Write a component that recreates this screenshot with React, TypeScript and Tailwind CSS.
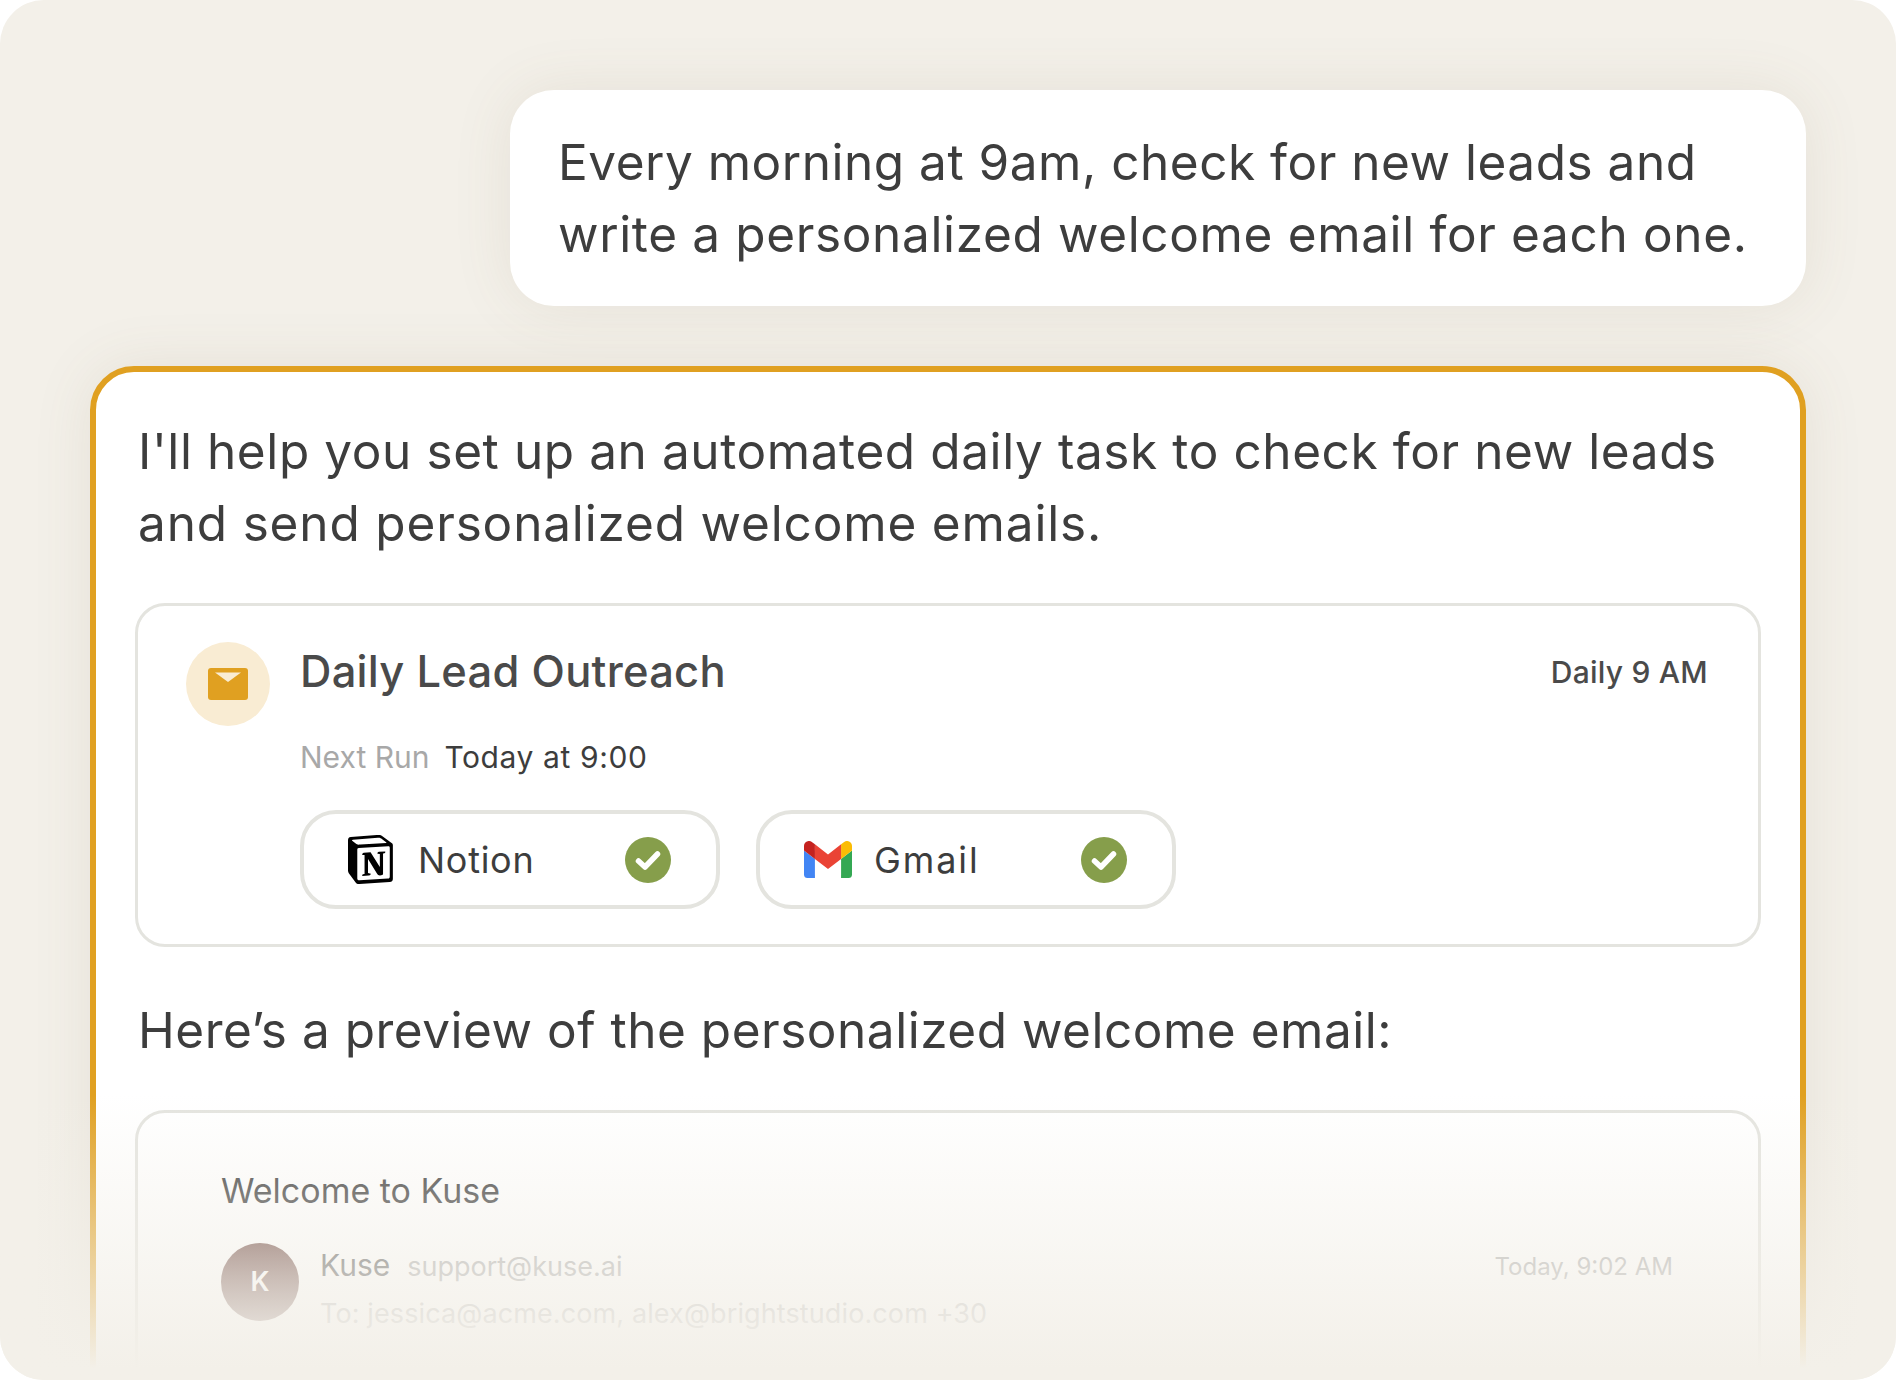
const font = 'font-["Inter","Liberation_Sans",sans-serif]'

function NotionLogo() {
  return (
    <svg width="45" height="49" viewBox="0 0 96 100" preserveAspectRatio="none" className="shrink-0">
      <path
        fill="#fff"
        d="M6.017 4.313l55.333 -4.087c6.797 -0.583 8.543 -0.19 12.817 2.917l17.663 12.443c2.913 2.14 3.883 2.723 3.883 5.053v68.243c0 4.277 -1.553 6.807 -6.99 7.193L24.467 99.967c-4.08 0.193 -6.023 -0.39 -8.16 -3.113L3.3 79.94c-2.333 -3.113 -3.3 -5.443 -3.3 -8.167V11.113c0 -3.497 1.553 -6.413 6.017 -6.8z"
      />
      <path
        fill="#000"
        fillRule="evenodd"
        d="M61.35 0.227l-55.333 4.087C1.553 4.7 0 7.617 0 11.113v60.66c0 2.723 0.967 5.053 3.3 8.167l13.007 16.913c2.137 2.723 4.08 3.307 8.16 3.113l64.257 -3.89c5.433 -0.387 6.99 -2.917 6.99 -7.193V20.64c0 -2.21 -0.873 -2.847 -3.443 -4.733L74.167 3.143c-4.273 -3.107 -6.02 -3.5 -12.817 -2.917zM25.92 19.523c-5.247 0.353 -6.437 0.433 -9.417 -1.99L8.927 11.507c-0.77 -0.78 -0.383 -1.753 1.557 -1.947l53.193 -3.887c4.467 -0.39 6.793 1.167 8.54 2.527l9.123 6.61c0.39 0.197 1.36 1.36 0.193 1.36l-54.933 3.307 -0.68 0.047zM19.803 88.3V30.367c0 -2.53 0.777 -3.697 3.103 -3.893L86 22.78c2.14 -0.193 3.107 1.167 3.107 3.693v57.547c0 2.53 -0.39 4.67 -3.883 4.863l-60.377 3.5c-3.493 0.193 -5.043 -0.97 -5.043 -4.083zm59.6 -54.827c0.387 1.75 0 3.5 -1.75 3.7l-2.91 0.577v42.773c-2.527 1.36 -4.853 2.137 -6.797 2.137 -3.107 0 -3.883 -0.973 -6.21 -3.887l-19.03 -29.94v28.967l6.02 1.363s0 3.5 -4.857 3.5l-13.39 0.777c-0.39 -0.78 0 -2.723 1.357 -3.11l3.497 -0.97v-38.3L30.48 40.667c-0.39 -1.75 0.58 -4.277 3.3 -4.473l14.367 -0.967 19.8 30.327v-26.83l-5.047 -0.58c-0.39 -2.143 1.163 -3.7 3.103 -3.89l13.4 -0.78z"
      />
    </svg>
  )
}

function GmailLogo() {
  return (
    <svg width="48" height="37" viewBox="52 42 88 66" preserveAspectRatio="none" className="shrink-0">
      <path fill="#4285f4" d="M58 108h14V74L52 59v43c0 3.32 2.69 6 6 6" />
      <path fill="#34a853" d="M120 108h14c3.32 0 6-2.69 6-6V59l-20 15" />
      <path fill="#fbbc04" d="M120 48v26l20-15v-8c0-7.42-8.47-11.65-14.4-7.2" />
      <path fill="#ea4335" d="M72 74V48l24 18 24-18v26L96 92" />
      <path fill="#c5221f" d="M52 51v8l20 15V48l-5.6-4.2c-5.94-4.45-14.4-.22-14.4 7.2" />
    </svg>
  )
}

function CheckBadge() {
  return (
    <svg width="46" height="46" viewBox="0 0 46 46" className="shrink-0">
      <circle cx="23" cy="23" r="23" fill="#869e4b" />
      <path d="M13.5 24l6.5 6 12.5-13" fill="none" stroke="#fff" strokeWidth="5.5" strokeLinecap="round" strokeLinejoin="round" />
    </svg>
  )
}

function MailIcon() {
  return (
    <svg width="40" height="32" viewBox="0 0 40 32">
      <rect width="40" height="32" rx="3" fill="#e0a021" />
      <path d="M7 4.5h26L20 14z" fill="#f9ecd3" />
    </svg>
  )
}

function Chip({ logo, label, labelClass }: { logo: React.ReactNode; label: string; labelClass: string }) {
  return (
    <div className="flex h-[99px] w-[420px] items-center rounded-[36px] border-[4px] border-[#e4e4df] pl-[44px] pr-[45px]">
      <div className="flex w-[48px] justify-start">{logo}</div>
      <span className={`ml-[22px] flex-1 text-[36px] leading-[48px] text-[#3d3d3d] ${labelClass}`}>{label}</span>
      <CheckBadge />
    </div>
  )
}

export default function App() {
  return (
    <div className={`relative h-[1380px] w-[1896px] overflow-hidden rounded-[44px] bg-[#f3f0e9] px-[90px] pt-[90px] ${font}`}>
      <div className="ml-auto w-[1296px] rounded-[44px] bg-white py-[36px] pl-[48px] pr-[20px] text-[49.5px] leading-[72px] whitespace-nowrap text-[#3d3d3d] shadow-[0_0_60px_rgba(120,100,70,0.1)]">
        <p className="tracking-[0.0105em]">Every morning at 9am, check for new leads and</p>
        <p className="tracking-[0.013em]">write a personalized welcome email for each one.</p>
      </div>

      <div className="mt-[60px] rounded-[44px] border-[6px] border-[#e0a021] bg-white px-[39px] pt-[43px] shadow-[0_0_60px_rgba(120,100,70,0.1)]">
        <div className="pl-[3px] text-[49.5px] leading-[72px] whitespace-nowrap text-[#3d3d3d]">
          <p className="tracking-[0.012em]">I'll help you set up an automated daily task to check for new leads</p>
          <p className="tracking-[0.017em]">and send personalized welcome emails.</p>
        </div>

        <div className="mt-[44px] flex h-[344px] gap-[30px] rounded-[30px] border-[3px] border-[#e4e4df] pl-[48px] pr-[50px] pt-[36px]">
          <div className="flex h-[84px] w-[84px] shrink-0 items-center justify-center rounded-full bg-[#f9ecd3]">
            <MailIcon />
          </div>
          <div className="flex-1">
            <div className="flex h-[60px] items-center justify-between">
              <h3 className="text-[43.5px] font-medium tracking-[0.006em] text-[#4a4a4a]">Daily Lead Outreach</h3>
              <span className="text-[30px] font-medium tracking-[0.008em] text-[#4a4a4a]">Daily 9 AM</span>
            </div>
            <div className="mt-[33px] flex h-[45px] items-center gap-[15px] text-[30px]">
              <span className="text-[#a8a8a8]">Next Run</span>
              <span className="tracking-[0.02em] text-[#3d3d3d]">Today at 9:00</span>
            </div>
            <div className="mt-[30px] flex gap-[36px]">
              <Chip logo={<NotionLogo />} label="Notion" labelClass="tracking-[0.02em]" />
              <Chip logo={<GmailLogo />} label="Gmail" labelClass="tracking-[0.053em]" />
            </div>
          </div>
        </div>

        <p className="mt-[47px] pl-[3px] text-[49.5px] leading-[72px] tracking-[0.0105em] whitespace-nowrap text-[#3d3d3d]">
          Here’s a preview of the personalized welcome email:
        </p>

        <div className="mt-[44px] h-[340px] rounded-[30px] border-[3px] border-[#e4e4df] pl-[83px] pr-[85px] pt-[54px]">
          <p className="text-[34px] leading-[48px] text-[#3a3a3a]">Welcome to Kuse</p>
          <div className="mt-[28px] flex gap-[21px]">
            <div className="flex h-[78px] w-[78px] shrink-0 items-center justify-center rounded-full bg-gradient-to-b from-[#6c443d] to-[#8a6f6a] text-[27px] font-semibold text-white">
              K
            </div>
            <div className="flex-1">
              <div className="flex h-[45px] items-center justify-between">
                <div className="flex items-baseline gap-[17px]">
                  <span className="text-[30px] text-[#555]">Kuse</span>
                  <span className="text-[27px] text-[#aaa]">support@kuse.ai</span>
                </div>
                <span className="pt-[3px] text-[24px] text-[#aaa]">Today, 9:02 AM</span>
              </div>
              <p className="mt-[3px] h-[45px] text-[27px] leading-[45px] tracking-[0.004em] text-[#bbb]">To: jessica@acme.com, alex@brightstudio.com +30</p>
            </div>
          </div>
        </div>
      </div>

      {/* fade out toward the bottom */}
      <div className="pointer-events-none absolute inset-x-0 bottom-0 h-[285px] bg-gradient-to-b from-[#f3f0e900] to-[#f3f0e9] to-[96%]" />
    </div>
  )
}
